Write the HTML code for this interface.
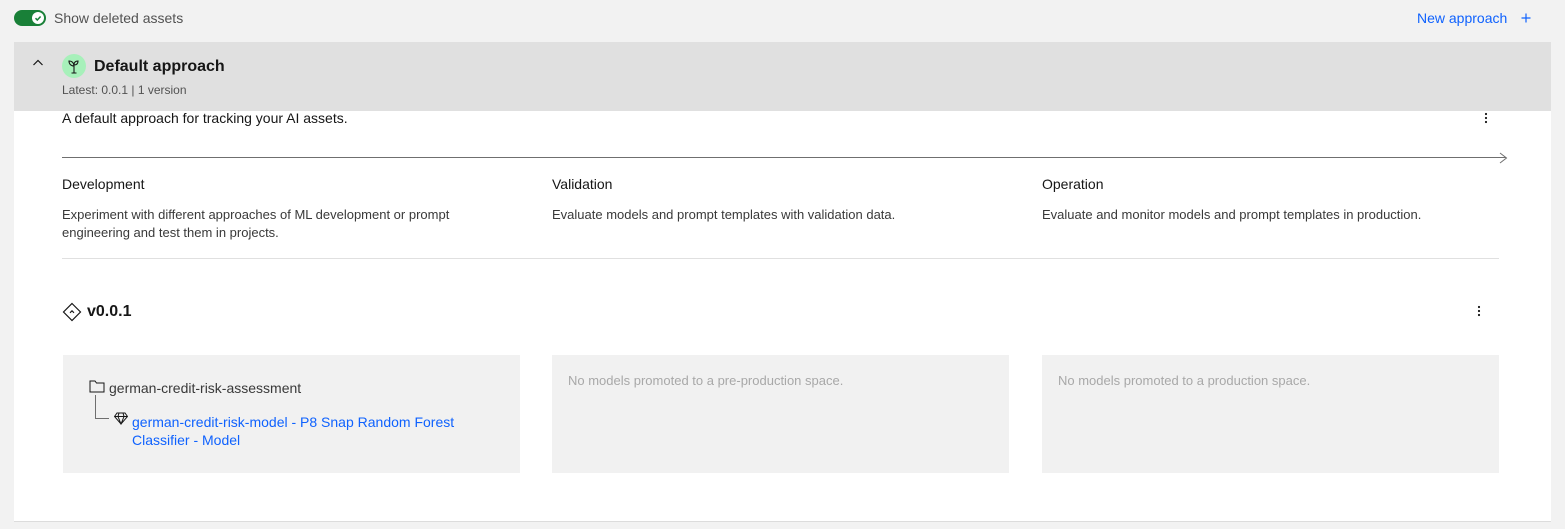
<!DOCTYPE html>
<html><head><meta charset="utf-8"><style>
*{margin:0;padding:0;box-sizing:border-box}
body{width:1565px;height:529px;background:#f2f2f2;font-family:"Liberation Sans",sans-serif;color:#161616;position:relative;overflow:hidden}
.a{position:absolute}
.t{font-size:14px;color:#161616}
.g{color:#525252}
.box{position:absolute;top:355px;height:118px;width:457px;background:#f1f1f1}
.ph{font-size:13px;color:#a8a8a8;position:absolute;left:16px;top:18px}
</style></head><body>
<div class="a" style="left:14px;top:10px;width:32px;height:16px;border-radius:8px;background:#198038"></div>
<div class="a" style="left:32px;top:12px;width:12px;height:12px;border-radius:6px;background:#fff"></div>
<svg class="a" style="left:32px;top:12px" width="12" height="12"><path d="M3.5 6.2l1.8 1.8 3.3-3.5" stroke="#198038" stroke-width="1.5" fill="none"/></svg>
<div class="a t g" style="left:54px;top:10px">Show deleted assets</div>
<div class="a" style="left:1417px;top:10px;font-size:14px;color:#0f62fe">New approach</div>
<svg class="a" style="left:1521px;top:13px" width="10" height="10"><path d="M5 0.5v9M0.5 5h9" stroke="#0f62fe" stroke-width="1.2"/></svg>

<div class="a" style="left:14px;top:42px;width:1537px;height:480px;background:#fff;border-bottom:1px solid #dcdcdc"></div>
<div class="a" style="left:14px;top:42px;width:1537px;height:69px;background:#e0e0e0"></div>
<svg class="a" style="left:32px;top:58px" width="12" height="10"><path d="M1.5 7l4.5-4.5 4.5 4.5" stroke="#161616" stroke-width="1.2" fill="none"/></svg>
<div class="a" style="left:62px;top:54px;width:24px;height:24px;border-radius:12px;background:#a7f0ba"></div>
<svg class="a" style="left:62px;top:54px" width="24" height="24"><path d="M12 19v-8M12 12c0-3 -2-5-5-5 0 3 2 5 5 5M12 11c0-2.5 1.5-4 4-4 0 2.5-1.5 4-4 4M9.5 19h5" stroke="#161616" stroke-width="1.1" fill="none"/></svg>
<div class="a" style="left:94px;top:58px;font-size:16px;font-weight:bold">Default approach</div>
<div class="a g" style="left:62px;top:83px;font-size:12px">Latest: 0.0.1 | 1 version</div>

<div class="a t" style="left:62px;top:110px">A default approach for tracking your AI assets.</div>
<svg class="a" style="left:1484px;top:112px" width="4" height="12"><circle cx="2" cy="2" r="1.1" fill="#161616"/><circle cx="2" cy="6" r="1.1" fill="#161616"/><circle cx="2" cy="10" r="1.1" fill="#161616"/></svg>
<div class="a" style="left:62px;top:157px;width:1444px;height:1px;background:#6f6f6f"></div>
<svg class="a" style="left:1499px;top:152px" width="10" height="12"><path d="M1 1l6.5 5-6.5 5" stroke="#6f6f6f" stroke-width="1" fill="none"/></svg>

<div class="a t" style="left:62px;top:176px">Development</div>
<div class="a t" style="left:552px;top:176px">Validation</div>
<div class="a t" style="left:1042px;top:176px">Operation</div>
<div class="a" style="left:62px;top:206px;font-size:13px;line-height:18px;color:#393939;width:445px">Experiment with different approaches of ML development or prompt engineering and test them in projects.</div>
<div class="a" style="left:552px;top:206px;font-size:13px;line-height:18px;color:#393939">Evaluate models and prompt templates with validation data.</div>
<div class="a" style="left:1042px;top:206px;font-size:13px;line-height:18px;color:#393939">Evaluate and monitor models and prompt templates in production.</div>
<div class="a" style="left:62px;top:258px;width:1437px;height:1px;background:#e0e0e0"></div>

<svg class="a" style="left:62px;top:302px" width="20" height="20"><path d="M10 1.5L18.5 10 10 18.5 1.5 10z" stroke="#161616" stroke-width="1.2" fill="none"/><path d="M8 10.8l2-2 2 2" stroke="#161616" stroke-width="1.1" fill="none"/></svg>
<div class="a" style="left:87px;top:303px;font-size:16px;font-weight:bold">v0.0.1</div>
<svg class="a" style="left:1477px;top:305px" width="4" height="12"><circle cx="2" cy="2" r="1.1" fill="#161616"/><circle cx="2" cy="6" r="1.1" fill="#161616"/><circle cx="2" cy="10" r="1.1" fill="#161616"/></svg>

<div class="box" style="left:63px">
<svg class="a" style="left:26px;top:24px" width="16" height="14"><path d="M1 2h5l1.5 2H15v9H1z" stroke="#161616" stroke-width="1" fill="none"/></svg>
<div class="a t" style="left:46px;top:25px;color:#393939">german-credit-risk-assessment</div>
<div class="a" style="left:32px;top:40px;width:14px;height:24px;border-left:1px solid #6f6f6f;border-bottom:1px solid #6f6f6f"></div>
<svg class="a" style="left:51px;top:57px" width="14" height="13"><path d="M3 1h8l2.5 3.5L7 12 .5 4.5zM.5 4.5h13M5 1l-1 3.5L7 12l3-7.5L9 1" stroke="#161616" stroke-width="1" fill="none"/></svg>
<div class="a" style="left:69px;top:58px;font-size:14px;line-height:18px;color:#0f62fe;width:360px">german-credit-risk-model - P8 Snap Random Forest Classifier - Model</div>
</div>
<div class="box" style="left:552px"><div class="ph">No models promoted to a pre-production space.</div></div>
<div class="box" style="left:1042px"><div class="ph">No models promoted to a production space.</div></div>
</body></html>
